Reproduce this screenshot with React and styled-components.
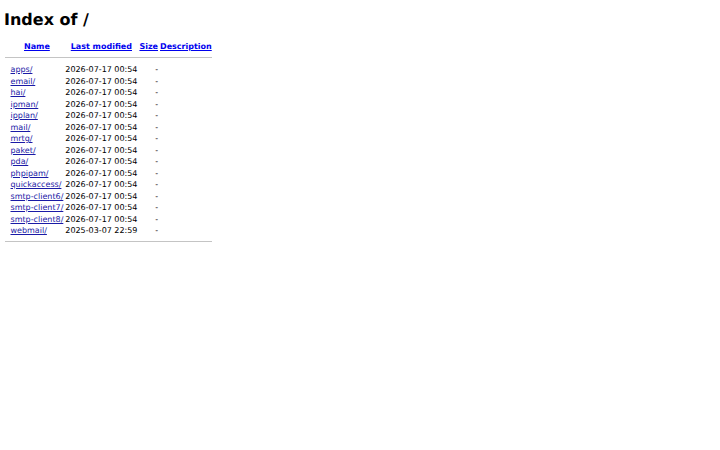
import React from "react";
import styled, { createGlobalStyle } from "styled-components";

const GlobalStyle = createGlobalStyle`
  html, body {
    margin: 0;
    padding: 0;
    background: #ffffff;
  }
  body {
    padding: 4px;
    font-family: "DejaVu Sans", "Liberation Sans", sans-serif;
    color: #000000;
    text-rendering: geometricPrecision;
  }
`;

const Heading = styled.h1`
  margin: 6px 0 11.5px;
  font-size: 16px;
  line-height: 19px;
  font-weight: bold;
`;

const Listing = styled.table`
  border-spacing: 1px;
  font-size: 8px;
  line-height: 9.5px;
`;

const HeadCell = styled.th`
  padding: 0.5px;
  text-align: center;
  font-weight: bold;
  vertical-align: top;
`;

const IconCell = styled.td`
  width: 3px;
  padding: 0 0.5px;
`;

const Cell = styled.td`
  padding: 0.5px;
  text-align: ${(p) => (p.$right ? "right" : "left")};
  white-space: nowrap;
  vertical-align: top;
`;

const Link = styled.a`
  color: ${(p) => (p.$head ? "#0000ee" : "#1a1aa6")};
  text-decoration: underline;
`;

const RuleCell = styled.th`
  padding: 0;
`;

const Rule = styled.hr`
  margin: ${(p) => (p.$top ? "4px 0 5.5px" : "3.5px 0 4px")};
  border: none;
  border-top: 1px solid #c4c4c4;
  height: 0;
`;

const entries = [
  ["apps/", "2026-07-17 00:54"],
  ["email/", "2026-07-17 00:54"],
  ["hai/", "2026-07-17 00:54"],
  ["ipman/", "2026-07-17 00:54"],
  ["ipplan/", "2026-07-17 00:54"],
  ["mail/", "2026-07-17 00:54"],
  ["mrtg/", "2026-07-17 00:54"],
  ["paket/", "2026-07-17 00:54"],
  ["pda/", "2026-07-17 00:54"],
  ["phpipam/", "2026-07-17 00:54"],
  ["quickaccess/", "2026-07-17 00:54"],
  ["smtp-client6/", "2026-07-17 00:54"],
  ["smtp-client7/", "2026-07-17 00:54"],
  ["smtp-client8/", "2026-07-17 00:54"],
  ["webmail/", "2025-03-07 22:59"],
];

export default function App() {
  return (
    <>
      <GlobalStyle />
      <Heading>Index of /</Heading>
      <Listing>
        <tbody>
          <tr>
            <HeadCell />
            <HeadCell>
              <Link $head href="?C=N;O=D">Name</Link>
            </HeadCell>
            <HeadCell>
              <Link $head href="?C=M;O=A">Last modified</Link>
            </HeadCell>
            <HeadCell>
              <Link $head href="?C=S;O=A">Size</Link>
            </HeadCell>
            <HeadCell>
              <Link $head href="?C=D;O=A">Description</Link>
            </HeadCell>
          </tr>
          <tr>
            <RuleCell colSpan={5}>
              <Rule $top />
            </RuleCell>
          </tr>
          {entries.map(([name, date]) => (
            <tr key={name}>
              <IconCell />
              <Cell>
                <Link href={name}>{name}</Link>
              </Cell>
              <Cell>{date}</Cell>
              <Cell $right>-</Cell>
              <Cell>&nbsp;</Cell>
            </tr>
          ))}
          <tr>
            <RuleCell colSpan={5}>
              <Rule />
            </RuleCell>
          </tr>
        </tbody>
      </Listing>
    </>
  );
}
